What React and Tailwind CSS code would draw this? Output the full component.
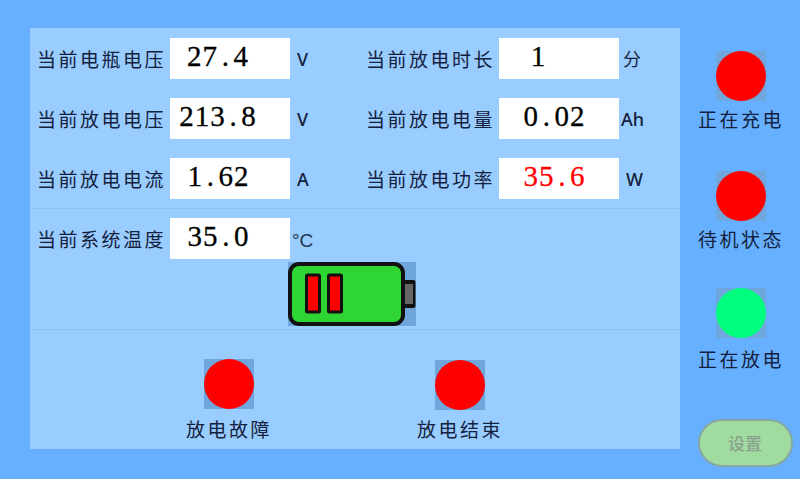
import React from 'react'

const cjk = "font-['Noto_Sans_CJK_SC',sans-serif]"
const caption = `${cjk} text-[19px] leading-[24px] tracking-[2.5px] text-[#14213d] whitespace-nowrap`

// fixed-width digits, the panel's font is monospaced including the dot
const Digits = ({ text }) => (
  <>
    {text.split('').map((c, i) => (
      <span key={i} className="inline-block w-[15.5px] text-center">{c}</span>
    ))}
  </>
)

const Field = ({ label, value, unit, valueClass, unitClass }) => (
  <div className="flex items-center h-[41px]">
    <span className={`${caption} w-[133px]`}>{label}</span>
    <div className={`w-[120px] h-[41px] bg-white flex items-center justify-center pb-[4px] font-['Liberation_Serif',serif] text-[29px] leading-none [-webkit-text-stroke-width:0.3px] ${valueClass}`}>
      <Digits text={value} />
    </div>
    <span className={`text-[#14213d] ${unitClass}`}>{unit}</span>
  </div>
)

const Lamp = ({ color }) => (
  <div className="w-[50px] h-[50px] bg-[#6fa6dc]">
    <div className={`w-[50px] h-[50px] rounded-full ${color}`} />
  </div>
)

const Battery = () => (
  <svg width="128" height="64" viewBox="0 0 128 64" className="block bg-[#6fa6dc]">
    <rect x="112" y="18" width="15.5" height="28" rx="2" fill="#111" />
    <rect x="115" y="22" width="10" height="20" fill="#666" />
    <rect x="2" y="2" width="113" height="60" rx="9" fill="#2fd633" stroke="#111" strokeWidth="4" />
    <rect x="18.5" y="13" width="13" height="37" rx="1" fill="#ff0000" stroke="#111" strokeWidth="3" />
    <rect x="40.5" y="13" width="13" height="37" rx="1" fill="#ff0000" stroke="#111" strokeWidth="3" />
  </svg>
)

const latin = "pt-[1px] font-['Noto_Sans',sans-serif] text-[18px] font-medium"

const left = [
  { label: '当前电瓶电压', value: '27.4', unit: 'V', valueClass: 'pr-[25px] text-black', unitClass: `ml-[7px] ${latin}` },
  { label: '当前放电电压', value: '213.8', unit: 'V', valueClass: 'pr-[25px] text-black', unitClass: `ml-[7px] ${latin}` },
  { label: '当前放电电流', value: '1.62', unit: 'A', valueClass: 'pr-[24px] text-black', unitClass: `ml-[7px] ${latin}` },
]

const right = [
  { label: '当前放电时长', value: '1', unit: '分', valueClass: 'pr-[42px] text-black', unitClass: `ml-[4px] text-[18px] ${cjk}` },
  { label: '当前放电电量', value: '0.02', unit: 'Ah', valueClass: 'pr-[10px] text-black', unitClass: `ml-[2px] ${latin}` },
  { label: '当前放电功率', value: '35.6', unit: 'W', valueClass: 'pr-[10px] text-[#ff0000]', unitClass: `ml-[7px] ${latin}` },
]

export default function App() {
  return (
    <div className="w-[800px] h-[479px] bg-[#66b0ff] flex pl-[30px] pt-[28px] overflow-hidden">
      {/* Main panel */}
      <div className="w-[650px] h-[421px] bg-[#99ccff] flex flex-col">
        <div className="h-[181px] border-b border-[#8fc1f2] pt-[10px] pl-[7px] flex">
          <div className="w-[329px] flex flex-col gap-[19px]">
            {left.map((f) => <Field key={f.label} {...f} />)}
          </div>
          <div className="flex flex-col gap-[19px]">
            {right.map((f) => <Field key={f.label} {...f} />)}
          </div>
        </div>

        <div className="h-[121px] border-b border-[#8fc1f2] pt-[9px]">
          <div className="pl-[7px]">
            <Field
              label="当前系统温度"
              value="35.0"
              unit="°C"
              valueClass="pr-[24px] text-black"
              unitClass="ml-[2px] pt-[5px] font-['Liberation_Sans',sans-serif] text-[19px] text-[#26344f]"
            />
          </div>
          <div className="ml-[258px] mt-[3px] w-[128px]">
            <Battery />
          </div>
        </div>

        <div className="flex pt-[29px]">
          <div className="ml-[156px] w-[86px] flex flex-col items-center">
            <Lamp color="bg-[#ff0000]" />
            <span className={`${caption} mt-[8px]`}>放电故障</span>
          </div>
          <div className="ml-[145px] w-[86px] flex flex-col items-center">
            <div className="mt-[1px]">
              <Lamp color="bg-[#ff0000]" />
            </div>
            <span className={`${caption} mt-[7px]`}>放电结束</span>
          </div>
        </div>
      </div>

      {/* Status column */}
      <div className="w-[120px] flex flex-col items-center pt-[23px] pl-[2px]">
        <Lamp color="bg-[#ff0000]" />
        <span className={`${caption} mt-[6px]`}>正在充电</span>
        <div className="mt-[40px]">
          <Lamp color="bg-[#ff0000]" />
        </div>
        <span className={`${caption} mt-[6px]`}>待机状态</span>
        <div className="mt-[37px]">
          <Lamp color="bg-[#00ff7f]" />
        </div>
        <span className={`${caption} mt-[9px]`}>正在放电</span>
        <button className={`${cjk} mt-[48px] ml-[8px] shrink-0 w-[95px] h-[48px] rounded-[24px] bg-[#a0dca0] border-2 border-[#86a8a0] text-[17px] font-medium text-[#8ba08c]`}>
          设置
        </button>
      </div>
    </div>
  )
}
